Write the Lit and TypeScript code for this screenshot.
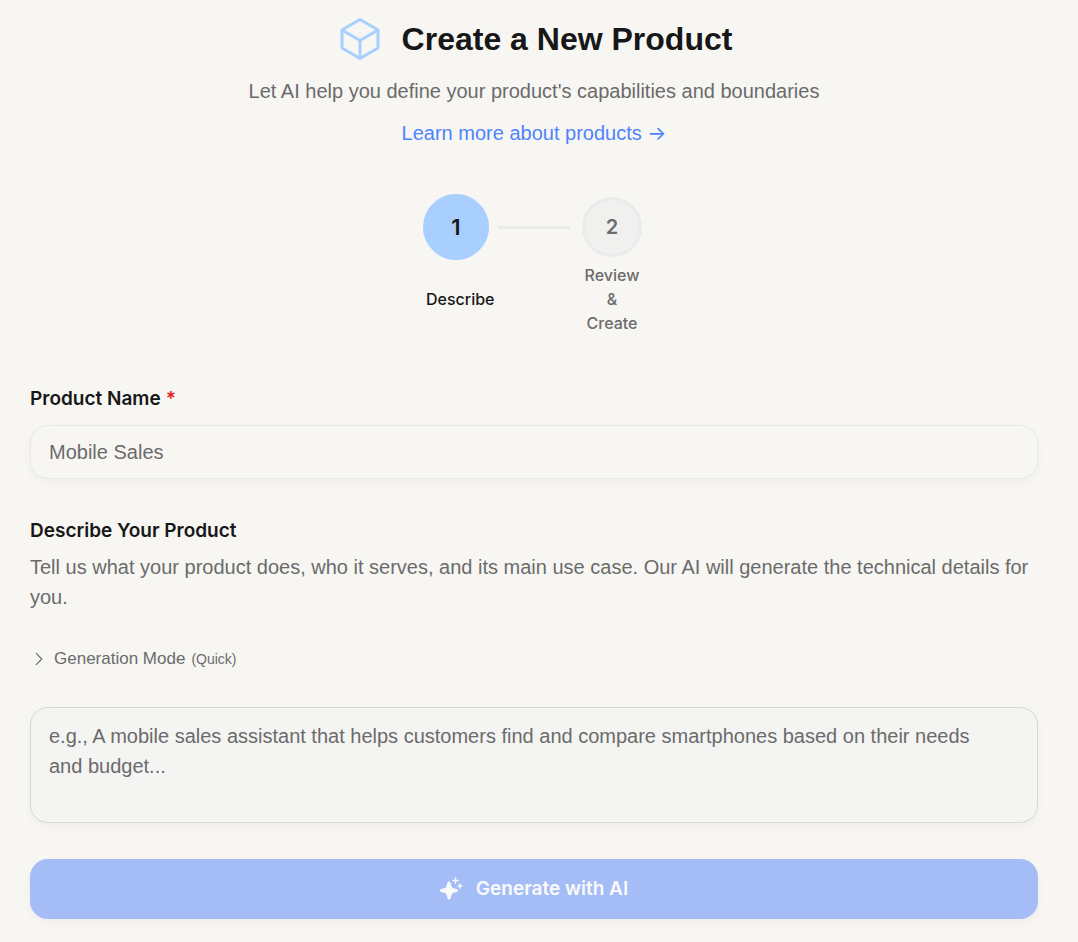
import { LitElement, html, css } from "lit";
import { customElement } from "lit/decorators.js";

@customElement("app-root")
export class AppRoot extends LitElement {
  static styles = css`
    :host {
      display: block;
      box-sizing: border-box;
      min-height: 100vh;
      padding: 14px 40px 23px 30px;
      background: #f7f6f3;
      color: #171717;
      font: 400 20px/30px "Liberation Sans", Arial, sans-serif;
    }
    *, *::before { box-sizing: border-box; }
    h1, p { margin: 0; }
    header { display: flex; flex-direction: column; align-items: center; text-align: center; gap: 12px; }
    .title { display: flex; align-items: center; gap: 18px; }
    .title svg { width: 48px; height: 48px; color: #a8cffe; }
    h1 { font: 700 32px/50px "Liberation Sans", Arial, sans-serif; }
    .muted { color: #6b6b6b; }
    a { color: #4f83fc; text-decoration: none; }
    .arrow { font-family: Inter, sans-serif; }
    .steps { display: flex; justify-content: center; gap: 12px; margin: 49px 0 0; padding: 0; list-style: none; }
    .step { display: flex; flex-direction: column; align-items: center; gap: 6px; width: 60px; font: 500 16px/24px Inter, sans-serif; color: #6b6b6b; text-align: center; }
    .dot { display: flex; align-items: center; justify-content: center; width: 60px; height: 60px; border: 3px solid #ebebeb; border-radius: 50%; background: #f0f0ef; font: 600 20px/30px Inter, sans-serif; }
    .label { display: flex; align-items: center; width: 100%; min-height: 72px; }
    .active { color: #171717; }
    .active .dot { border-color: #a8cffe; background: #a8cffe; transform: scale(1.1); }
    .line { width: 72px; height: 3px; margin-top: 29px; background: #ebebeb; }
    form { display: flex; flex-direction: column; margin-top: 49px; }
    .heading { display: flex; gap: 5px; font: 600 19px/30px Inter, sans-serif; }
    .req { color: #e01e1e; }
    input, textarea {
      display: block; width: 100%; border-radius: 18px; padding: 11px 18px; font: inherit; color: inherit;
      box-shadow: 0 3px 9px rgb(0 0 0 / 4%); outline: none; resize: none;
    }
    input { height: 54px; margin-top: 11px; border: 1px solid #e9e9e9; background: #f7f6f3; }
    textarea { height: 116px; margin-top: 36px; padding: 13px 30px 13px 18px; border: 1px solid #d6d7d6; background: #f4f4f2; }
    ::placeholder { color: #6b6b6b; opacity: 1; }
    .describe { margin-top: 37px; }
    .help { margin-top: 6px; }
    button { border: 0; font: inherit; cursor: pointer; }
    .mode { display: flex; align-items: center; align-self: flex-start; gap: 6px; margin-top: 35px; padding: 0; background: none; font-size: 17px; line-height: 24px; }
    .mode svg { width: 18px; height: 18px; }
    .mode small { font-size: 14px; }
    .generate { display: flex; align-items: center; justify-content: center; gap: 12px; height: 60px; margin-top: 36px; border-radius: 18px; background: #a4bdf7; color: #fafafa; font: 600 19px/30px Inter, sans-serif; box-shadow: 0 3px 9px rgb(0 0 0 / 4%); }
    .generate svg { width: 24px; height: 24px; }
  `;

  render() {
    return html`
      <header>
        <div class="title">
          <svg viewBox="0 0 24 24" fill="none" stroke="currentColor" stroke-width="1.5" stroke-linecap="round" stroke-linejoin="round" aria-hidden="true">
            <path d="m21 7.5-9-5.25L3 7.5m18 0-9 5.25m9-5.25v9l-9 5.25M3 7.5l9 5.25M3 7.5v9l9 5.25m0-9v9" />
          </svg>
          <h1>Create a New Product</h1>
        </div>
        <p class="muted">Let AI help you define your product's capabilities and boundaries</p>
        <a href="#products">Learn more about products <span class="arrow">→</span></a>
      </header>
      <ol class="steps">
        <li class="step active"><span class="dot">1</span><span class="label">Describe</span></li>
        <li class="line" role="presentation"></li>
        <li class="step"><span class="dot">2</span><span class="label">Review &amp; Create</span></li>
      </ol>
      <form @submit=${(e: Event) => e.preventDefault()}>
        <label class="heading" for="name">Product Name <span class="req">*</span></label>
        <input id="name" placeholder="Mobile Sales" required />
        <label class="heading describe" for="description">Describe Your Product</label>
        <p class="muted help">Tell us what your product does, who it serves, and its main use case. Our AI will generate the technical details for you.</p>
        <button class="mode muted" type="button" aria-expanded="false">
          <svg viewBox="0 0 24 24" fill="none" stroke="currentColor" stroke-width="1.5" stroke-linecap="round" stroke-linejoin="round" aria-hidden="true"><path d="m8.25 4.5 7.5 7.5-7.5 7.5" /></svg>
          <span>Generation Mode</span><small>(Quick)</small>
        </button>
        <textarea id="description" placeholder="e.g., A mobile sales assistant that helps customers find and compare smartphones based on their needs and budget..."></textarea>
        <button class="generate" type="submit">
          <svg viewBox="0 0 24 24" fill="currentColor" aria-hidden="true">
            <path d="M9 4.500c.900 0 1.300.600 1.600 1.600l1.100 3.400c.300.800.600 1.100 1.400 1.400l3.400 1.100c1 .300 1.500.700 1.500 1.500s-.500 1.200-1.500 1.500l-3.400 1.100c-.800.300-1.100.600-1.400 1.400l-1.100 3.400C10.300 21.900 9.900 22.500 9 22.500s-1.300-.600-1.600-1.600l-1.100-3.400c-.300-.800-.600-1.100-1.400-1.400L1.500 15C.500 14.700 0 14.300 0 13.500s.500-1.200 1.500-1.500l3.400-1.100c.800-.300 1.100-.600 1.400-1.400l1.100-3.400C7.700 5.100 8.100 4.500 9 4.500Z" />
            <path d="M15.500 1v5M13 3.500h5M20 7v4M18 9h4" fill="none" stroke="currentColor" stroke-width="1.300" stroke-linecap="round" />
          </svg>
          Generate with AI
        </button>
      </form>
    `;
  }
}
